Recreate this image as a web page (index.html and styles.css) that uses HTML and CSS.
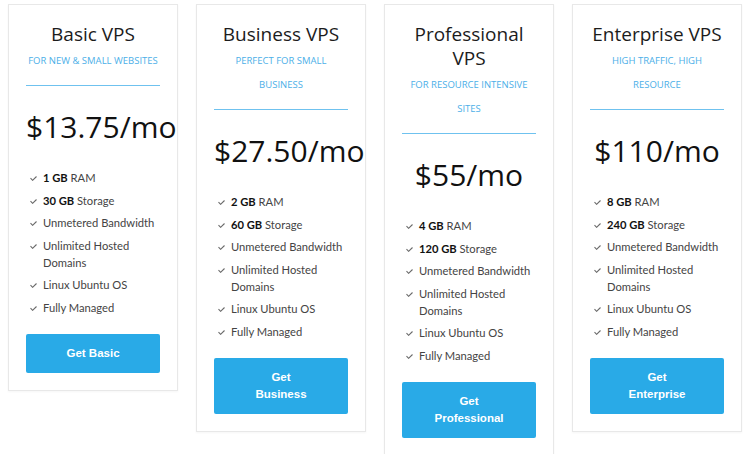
FILE: index.html
```html
<!DOCTYPE html>
<html lang="en">
<head>
  <meta charset="UTF-8">
  <meta name="viewport" content="width=device-width, initial-scale=1.0">
  <title>VPS Hosting Plans</title>
  <link rel="stylesheet" href="styles.css">
</head>
<body>
  <div class="plans">
    <div class="plan">
      <h2 class="plan-title">Basic VPS</h2>
      <p class="plan-tagline">For new &amp; small websites</p>
      <div class="plan-price">$13.75/mo</div>
      <ul class="plan-features">
        <li><svg class="tick" viewBox="0 0 7 5"><polyline points="0.5,2.2 2.6,4.3 6.5,0.5"/></svg><span><b>1 GB</b> RAM</span></li>
        <li><svg class="tick" viewBox="0 0 7 5"><polyline points="0.5,2.2 2.6,4.3 6.5,0.5"/></svg><span><b>30 GB</b> Storage</span></li>
        <li><svg class="tick" viewBox="0 0 7 5"><polyline points="0.5,2.2 2.6,4.3 6.5,0.5"/></svg><span>Unmetered Bandwidth</span></li>
        <li><svg class="tick" viewBox="0 0 7 5"><polyline points="0.5,2.2 2.6,4.3 6.5,0.5"/></svg><span>Unlimited Hosted Domains</span></li>
        <li><svg class="tick" viewBox="0 0 7 5"><polyline points="0.5,2.2 2.6,4.3 6.5,0.5"/></svg><span>Linux Ubuntu OS</span></li>
        <li><svg class="tick" viewBox="0 0 7 5"><polyline points="0.5,2.2 2.6,4.3 6.5,0.5"/></svg><span>Fully Managed</span></li>
      </ul>
      <a class="plan-button" href="#">Get Basic</a>
    </div>

    <div class="plan">
      <h2 class="plan-title">Business VPS</h2>
      <p class="plan-tagline">Perfect for small business</p>
      <div class="plan-price">$27.50/mo</div>
      <ul class="plan-features">
        <li><svg class="tick" viewBox="0 0 7 5"><polyline points="0.5,2.2 2.6,4.3 6.5,0.5"/></svg><span><b>2 GB</b> RAM</span></li>
        <li><svg class="tick" viewBox="0 0 7 5"><polyline points="0.5,2.2 2.6,4.3 6.5,0.5"/></svg><span><b>60 GB</b> Storage</span></li>
        <li><svg class="tick" viewBox="0 0 7 5"><polyline points="0.5,2.2 2.6,4.3 6.5,0.5"/></svg><span>Unmetered Bandwidth</span></li>
        <li><svg class="tick" viewBox="0 0 7 5"><polyline points="0.5,2.2 2.6,4.3 6.5,0.5"/></svg><span>Unlimited Hosted Domains</span></li>
        <li><svg class="tick" viewBox="0 0 7 5"><polyline points="0.5,2.2 2.6,4.3 6.5,0.5"/></svg><span>Linux Ubuntu OS</span></li>
        <li><svg class="tick" viewBox="0 0 7 5"><polyline points="0.5,2.2 2.6,4.3 6.5,0.5"/></svg><span>Fully Managed</span></li>
      </ul>
      <a class="plan-button" href="#">Get Business</a>
    </div>

    <div class="plan">
      <h2 class="plan-title">Professional VPS</h2>
      <p class="plan-tagline">For resource intensive sites</p>
      <div class="plan-price">$55/mo</div>
      <ul class="plan-features">
        <li><svg class="tick" viewBox="0 0 7 5"><polyline points="0.5,2.2 2.6,4.3 6.5,0.5"/></svg><span><b>4 GB</b> RAM</span></li>
        <li><svg class="tick" viewBox="0 0 7 5"><polyline points="0.5,2.2 2.6,4.3 6.5,0.5"/></svg><span><b>120 GB</b> Storage</span></li>
        <li><svg class="tick" viewBox="0 0 7 5"><polyline points="0.5,2.2 2.6,4.3 6.5,0.5"/></svg><span>Unmetered Bandwidth</span></li>
        <li><svg class="tick" viewBox="0 0 7 5"><polyline points="0.5,2.2 2.6,4.3 6.5,0.5"/></svg><span>Unlimited Hosted Domains</span></li>
        <li><svg class="tick" viewBox="0 0 7 5"><polyline points="0.5,2.2 2.6,4.3 6.5,0.5"/></svg><span>Linux Ubuntu OS</span></li>
        <li><svg class="tick" viewBox="0 0 7 5"><polyline points="0.5,2.2 2.6,4.3 6.5,0.5"/></svg><span>Fully Managed</span></li>
      </ul>
      <a class="plan-button" href="#">Get Professional</a>
    </div>

    <div class="plan">
      <h2 class="plan-title">Enterprise VPS</h2>
      <p class="plan-tagline">High traffic, high resource</p>
      <div class="plan-price">$110/mo</div>
      <ul class="plan-features">
        <li><svg class="tick" viewBox="0 0 7 5"><polyline points="0.5,2.2 2.6,4.3 6.5,0.5"/></svg><span><b>8 GB</b> RAM</span></li>
        <li><svg class="tick" viewBox="0 0 7 5"><polyline points="0.5,2.2 2.6,4.3 6.5,0.5"/></svg><span><b>240 GB</b> Storage</span></li>
        <li><svg class="tick" viewBox="0 0 7 5"><polyline points="0.5,2.2 2.6,4.3 6.5,0.5"/></svg><span>Unmetered Bandwidth</span></li>
        <li><svg class="tick" viewBox="0 0 7 5"><polyline points="0.5,2.2 2.6,4.3 6.5,0.5"/></svg><span>Unlimited Hosted Domains</span></li>
        <li><svg class="tick" viewBox="0 0 7 5"><polyline points="0.5,2.2 2.6,4.3 6.5,0.5"/></svg><span>Linux Ubuntu OS</span></li>
        <li><svg class="tick" viewBox="0 0 7 5"><polyline points="0.5,2.2 2.6,4.3 6.5,0.5"/></svg><span>Fully Managed</span></li>
      </ul>
      <a class="plan-button" href="#">Get Enterprise</a>
    </div>
  </div>
</body>
</html>
```

FILE: styles.css
```css
body {
  margin: 0;
  background-color: #fff;
  font-family: 'Open Sans', sans-serif;
  color: #222;
}

.plans {
  display: flex;
  align-items: flex-start;
  gap: 18px;
  padding: 4px 8px;
}

.plan {
  flex: 0 0 170px;
  min-width: 0;
  box-sizing: border-box;
  padding: 17px 17px 17px;
  border: 1px solid #e8e8e8;
  box-shadow: 0 1px 2px rgba(0, 0, 0, 0.04);
  text-align: center;
}

.plan-title {
  margin: 0;
  font-size: 19px;
  font-weight: 400;
  line-height: 24px;
  color: #1c1c1c;
}

.plan-tagline {
  margin: 3px 0 0;
  padding-bottom: 12px;
  border-bottom: 1px solid #6fc2ef;
  font-size: 9.5px;
  line-height: 24px;
  text-transform: uppercase;
  color: #4cafe8;
}

.plan-price {
  margin-top: 23px;
  font-size: 30px;
  line-height: 36px;
  color: #111;
  white-space: nowrap;
}

.plan-features {
  list-style: none;
  margin: 24px 0 18px;
  padding: 0 0 0 4px;
  text-align: left;
  font-family: 'Lato', sans-serif;
  font-size: 11.2px;
  line-height: 17px;
  color: #444;
}

.plan-features li {
  display: flex;
  align-items: flex-start;
  margin-bottom: 5.5px;
}

.plan-features b {
  color: #111;
}

.tick {
  flex: 0 0 7px;
  width: 7px;
  height: 5px;
  margin: 7px 6px 0 0;
  fill: none;
  stroke: #6a6a6a;
  stroke-width: 1.1;
}

.plan-button {
  display: block;
  padding: 11px 32px;
  border-radius: 2px;
  background-color: #29aae7;
  color: #fff;
  font-family: 'Liberation Sans', Arial, sans-serif;
  font-size: 11.5px;
  font-weight: bold;
  line-height: 17px;
  text-decoration: none;
}
```
